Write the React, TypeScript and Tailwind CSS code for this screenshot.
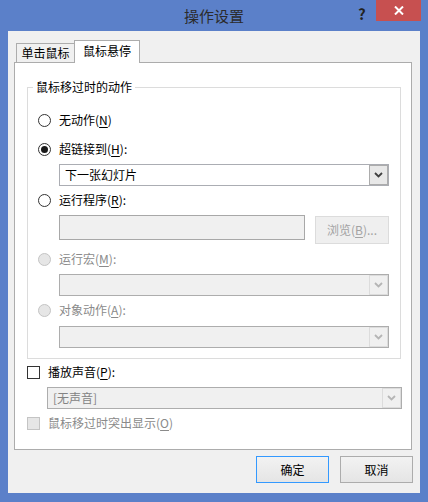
import React from "react";

const font = { fontFamily: '"Noto Sans CJK SC", "Liberation Sans", sans-serif' };

function Radio({ checked, disabled }: { checked?: boolean; disabled?: boolean }) {
  return (
    <span
      className={`flex h-[13px] w-[13px] shrink-0 items-center justify-center rounded-full border ${
        disabled ? "border-[#c4c4c4] bg-[#e6e6e6]" : "border-[#333] bg-white"
      }`}
    >
      {checked && <span className="h-[7px] w-[7px] rounded-full bg-[#1a1a1a]" />}
    </span>
  );
}

function Arrow({ disabled }: { disabled?: boolean }) {
  return (
    <svg width="9" height="6" viewBox="0 0 9 6">
      <path
        d="M1 1 L4.5 4.5 L8 1"
        fill="none"
        stroke={disabled ? "#b5b5b5" : "#404040"}
        strokeWidth="1.8"
      />
    </svg>
  );
}

function Select({ text, disabled, className }: { text?: string; disabled?: boolean; className: string }) {
  return (
    <div
      className={`flex items-stretch border ${
        disabled ? "border-[#adadad] bg-[#f0f0f0]" : "border-[#abadb3] bg-white"
      } ${className}`}
    >
      <div className={`flex flex-1 items-center pl-[5px] text-[12px] ${disabled ? "text-[#838383]" : "text-black"}`}>
        {text}
      </div>
      <div
        className={`flex w-[19px] items-center justify-center border ${
          disabled ? "border-[#dcdcdc] bg-[#f0f0f0]" : "border-[#acacac] bg-[#e8e8e8]"
        }`}
      >
        <Arrow disabled={disabled} />
      </div>
    </div>
  );
}

function Label({ text, k, tail, disabled }: { text: string; k: string; tail?: string; disabled?: boolean }) {
  return (
    <span className={`text-[12px] leading-none ${disabled ? "text-[#8a8a8a]" : "text-black"}`}>
      {text}(<span className="underline underline-offset-2">{k}</span>){tail}
    </span>
  );
}

export default function App() {
  return (
    <div className="flex h-[502px] w-[428px] flex-col bg-[#5b80c9]" style={font}>
      {/* title bar */}
      <div className="relative h-[31px] shrink-0">
        <div className="pt-[5px] text-center text-[15px] text-[#2b2b2b]">操作设置</div>
        <span className="absolute left-[358px] top-[3px] text-[15px] font-bold text-[#222]">?</span>
        <div className="absolute left-[376px] top-0 flex h-[21px] w-[45px] items-center justify-center bg-[#c75050]">
          <svg width="10" height="9" viewBox="0 0 10 9">
            <path d="M1 0.5 L9 8.5 M9 0.5 L1 8.5" stroke="#fff" strokeWidth="2" />
          </svg>
        </div>
      </div>

      {/* client area */}
      <div className="mx-[8px] flex h-[462px] flex-col bg-[#f0f0f0] pl-[6px] pr-[7px] pt-[9px]">
        {/* tabs */}
        <div className="flex h-[22px] items-end pl-[2px]">
          <div className="flex h-[19px] w-[58px] items-center justify-center border border-b-0 border-r-0 border-[#acacac] bg-[#f0f0f0] text-[12px]">
            单击鼠标
          </div>
          <div className="relative z-10 -mb-px flex h-[23px] w-[66px] items-center justify-center border border-b-0 border-[#acacac] bg-white pb-[2px] text-[12px]">
            鼠标悬停
          </div>
        </div>

        {/* tab panel */}
        <div className="flex h-[388px] w-[398px] flex-col border border-[#acacac] bg-white">
          {/* group box */}
          <div className="relative ml-[12px] mt-[24px] flex h-[272px] w-[374px] flex-col border border-[#dcdcdc] pr-[11px]">
            <span className="absolute -top-[9px] left-[5px] bg-white px-[3px] text-[12px] leading-[16px]">
              鼠标移过时的动作
            </span>

            <div className="mt-[22px] flex h-[20px] items-center gap-[8px] pl-[10px]">
              <Radio />
              <Label text="无动作" k="N" />
            </div>
            <div className="mt-[9px] flex h-[20px] items-center gap-[8px] pl-[10px]">
              <Radio checked />
              <Label text="超链接到" k="H" tail=":" />
            </div>
            <Select text="下一张幻灯片" className="ml-[31px] mt-[5px] h-[22px]" />

            <div className="mt-[4px] flex h-[20px] items-center gap-[8px] pl-[10px]">
              <Radio />
              <Label text="运行程序" k="R" tail=":" />
            </div>
            <div className="ml-[31px] mt-[5px] flex items-start gap-[10px]">
              <div className="h-[25px] w-[246px] border border-[#a8a8a8] bg-[#f0f0f0]" />
              <div className="mt-px flex h-[28px] flex-1 items-center justify-center border border-[#dcdcdc] bg-[#efefef] text-[12px] text-[#a3a3a3]">
                浏览(<span className="underline underline-offset-2">B</span>)...
              </div>
            </div>

            <div className="mt-[5px] flex h-[20px] items-center gap-[8px] pl-[10px]">
              <Radio disabled />
              <Label text="运行宏" k="M" tail=":" disabled />
            </div>
            <Select disabled className="ml-[31px] mt-[5px] h-[22px]" />

            <div className="mt-[4px] flex h-[20px] items-center gap-[8px] pl-[10px]">
              <Radio disabled />
              <Label text="对象动作" k="A" tail=":" disabled />
            </div>
            <Select disabled className="ml-[31px] mt-[6px] h-[22px]" />
          </div>

          {/* sound */}
          <div className="ml-[12px] mt-[3px] flex h-[20px] items-center gap-[8px]">
            <span className="h-[13px] w-[13px] border border-[#333] bg-white" />
            <Label text="播放声音" k="P" tail=":" />
          </div>
          <Select disabled text="[无声音]" className="ml-[32px] mt-[5px] h-[22px] w-[355px]" />
          <div className="ml-[12px] mt-[4px] flex h-[20px] items-center gap-[8px]">
            <span className="h-[13px] w-[13px] border border-[#c4c4c4] bg-[#e6e6e6]" />
            <Label text="鼠标移过时突出显示" k="O" disabled />
          </div>
        </div>

        {/* buttons */}
        <div className="mt-[6px] flex justify-end gap-[11px]">
          <button className="h-[27px] w-[73px] border border-[#3399ff] bg-gradient-to-b from-[#f2f2f2] to-[#e5e5e5] text-[12px] text-black">
            确定
          </button>
          <button className="h-[27px] w-[73px] border border-[#acacac] bg-gradient-to-b from-[#f2f2f2] to-[#e5e5e5] text-[12px] text-black">
            取消
          </button>
        </div>
      </div>
    </div>
  );
}
